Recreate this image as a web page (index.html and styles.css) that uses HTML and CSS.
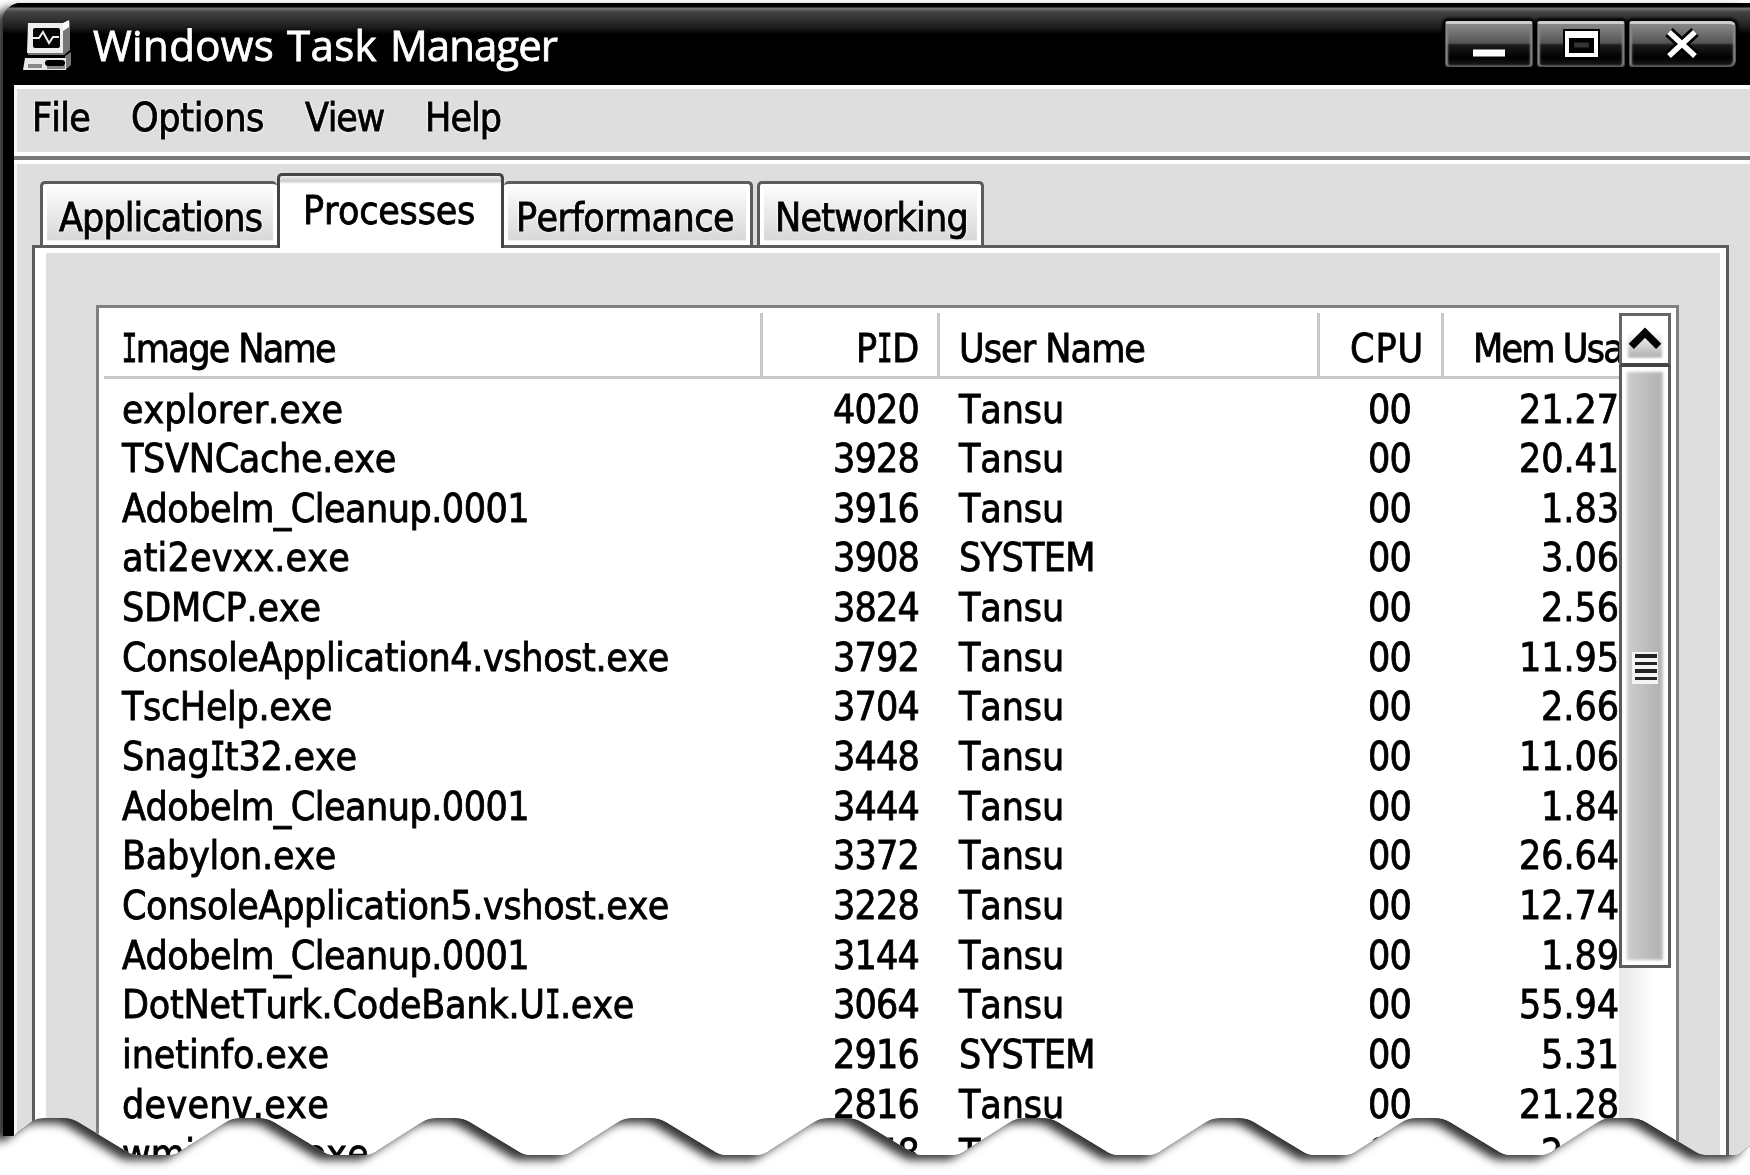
FILE: index.html
```html
<!DOCTYPE html>
<html lang="en">
<head>
<meta charset="utf-8">
<title>Windows Task Manager</title>
<link rel="stylesheet" href="styles.css">
</head>
<body>
<div class="shadow">
<div class="torn">
<div class="window">
  <header class="titlebar">
    <svg class="app-icon" width="52" height="52" viewBox="0 0 52 52">
      <path d="M7 4h35l5-3v29l-6 5H5V6z" fill="#777"/>
      <path d="M5 3h35v30H4z" fill="#eee"/>
      <path d="M40 3l6-3v7l-6 4z" fill="#fff"/>
      <rect x="10" y="8" width="27" height="20" rx="2" fill="#050505"/>
      <path d="M10 18h6l4-6 6 11 4-6h6" fill="none" stroke="#eee" stroke-width="2"/>
      <path d="M42 36l6-4v13l-6 5z" fill="#777"/>
      <path d="M2 38h41v12H0z" fill="#e8e8e8"/>
      <path d="M5 46h14M24 47h18" stroke="#888" stroke-width="4"/>
      <rect x="22" y="40" width="20" height="6" rx="3" fill="#000"/>
    </svg>
    <h1 class="title"><span data-w="181">Windows</span><span data-w="90">Task</span><span data-w="167">Manager</span></h1>
    <div class="controls">
      <span class="control"><svg width="88" height="46" viewBox="0 0 88 46"><path d="M28 32h32" stroke="#fff" stroke-width="7"/></svg></span>
      <span class="control"><svg width="88" height="46" viewBox="0 0 88 46"><path d="M26 8h37v31H26z" fill="#000"/><path fill="#fff" fill-rule="evenodd" d="M28 10h33v26H28zM32 17v15h25V17z"/><path d="M37 24h15" stroke="#333" stroke-width="5"/></svg></span>
      <span class="control close"><svg width="107" height="46" viewBox="0 0 107 46"><path d="M40 11l26 24M66 11L40 35" stroke="#000" stroke-width="11"/><path d="M40 11l26 24M66 11L40 35" stroke="#fff" stroke-width="5.500"/></svg></span>
    </div>
  </header>
  <div class="client">
    <nav class="menu">
      <span data-w="58">File</span><span data-w="133">Options</span><span data-w="79">View</span><span data-w="76">Help</span>
    </nav>
    <div class="rule"></div>
    <main class="pages">
      <div class="tabs">
        <div class="tab apps"><span data-w="203">Applications</span></div>
        <div class="tab active"><span data-w="172">Processes</span></div>
        <div class="tab perf"><span data-w="218">Performance</span></div>
        <div class="tab net"><span data-w="193">Networking</span></div>
      </div>
      <section class="panel">
        <div class="list">
          <div class="table">
            <div class="row head"><div><span data-w="213"><b class="cap-i">I</b>mage Name</span></div><div><span data-w="63">P<b class="cap-i">I</b>D</span></div><div><span data-w="186">User Name</span></div><div><span data-w="74">CPU</span></div><div><span data-w="190">Mem Usage</span></div></div>
            <div class="row"><div><span data-w="221">explorer.exe</span></div><div><span data-w="86">4020</span></div><div><span data-w="105">Tansu</span></div><div><span data-w="43">00</span></div><div><span data-w="100">21.27</span></div></div>
            <div class="row"><div><span data-w="274">TSVNCache.exe</span></div><div><span data-w="86">3928</span></div><div><span data-w="105">Tansu</span></div><div><span data-w="43">00</span></div><div><span data-w="100">20.41</span></div></div>
            <div class="row"><div><span data-w="407">Adobelm_Cleanup.0001</span></div><div><span data-w="86">3916</span></div><div><span data-w="105">Tansu</span></div><div><span data-w="43">00</span></div><div><span data-w="78">1.83</span></div></div>
            <div class="row"><div><span data-w="228">ati2evxx.exe</span></div><div><span data-w="86">3908</span></div><div><span data-w="136">SYSTEM</span></div><div><span data-w="43">00</span></div><div><span data-w="78">3.06</span></div></div>
            <div class="row"><div><span data-w="199">SDMCP.exe</span></div><div><span data-w="86">3824</span></div><div><span data-w="105">Tansu</span></div><div><span data-w="43">00</span></div><div><span data-w="78">2.56</span></div></div>
            <div class="row"><div><span data-w="547">ConsoleApplication4.vshost.exe</span></div><div><span data-w="86">3792</span></div><div><span data-w="105">Tansu</span></div><div><span data-w="43">00</span></div><div><span data-w="100">11.95</span></div></div>
            <div class="row"><div><span data-w="210">TscHelp.exe</span></div><div><span data-w="86">3704</span></div><div><span data-w="105">Tansu</span></div><div><span data-w="43">00</span></div><div><span data-w="78">2.66</span></div></div>
            <div class="row"><div><span data-w="235">Snag<b class="cap-i">I</b>t32.exe</span></div><div><span data-w="86">3448</span></div><div><span data-w="105">Tansu</span></div><div><span data-w="43">00</span></div><div><span data-w="100">11.06</span></div></div>
            <div class="row"><div><span data-w="407">Adobelm_Cleanup.0001</span></div><div><span data-w="86">3444</span></div><div><span data-w="105">Tansu</span></div><div><span data-w="43">00</span></div><div><span data-w="78">1.84</span></div></div>
            <div class="row"><div><span data-w="214">Babylon.exe</span></div><div><span data-w="86">3372</span></div><div><span data-w="105">Tansu</span></div><div><span data-w="43">00</span></div><div><span data-w="100">26.64</span></div></div>
            <div class="row"><div><span data-w="547">ConsoleApplication5.vshost.exe</span></div><div><span data-w="86">3228</span></div><div><span data-w="105">Tansu</span></div><div><span data-w="43">00</span></div><div><span data-w="100">12.74</span></div></div>
            <div class="row"><div><span data-w="407">Adobelm_Cleanup.0001</span></div><div><span data-w="86">3144</span></div><div><span data-w="105">Tansu</span></div><div><span data-w="43">00</span></div><div><span data-w="78">1.89</span></div></div>
            <div class="row"><div><span data-w="512">DotNetTurk.CodeBank.U<b class="cap-i">I</b>.exe</span></div><div><span data-w="86">3064</span></div><div><span data-w="105">Tansu</span></div><div><span data-w="43">00</span></div><div><span data-w="100">55.94</span></div></div>
            <div class="row"><div><span data-w="207">inetinfo.exe</span></div><div><span data-w="86">2916</span></div><div><span data-w="136">SYSTEM</span></div><div><span data-w="43">00</span></div><div><span data-w="78">5.31</span></div></div>
            <div class="row"><div><span data-w="207">devenv.exe</span></div><div><span data-w="86">2816</span></div><div><span data-w="105">Tansu</span></div><div><span data-w="43">00</span></div><div><span data-w="100">21.28</span></div></div>
            <div class="row"><div><span data-w="247">wmiprvse.exe</span></div><div><span data-w="86">2548</span></div><div><span data-w="105">Tansu</span></div><div><span data-w="43">00</span></div><div><span data-w="78">2.80</span></div></div>
          </div>
          <div class="scrollbar">
            <div class="arrow"><svg width="46" height="48" viewBox="0 0 46 48"><path d="M9 31L23 17l14 14" fill="none" stroke="#000" stroke-width="7.500"/></svg></div>
            <div class="thumb"><div class="grip"><i></i><i></i><i></i><i></i></div></div>
          </div>
        </div>
      </section>
    </main>
  </div>
</div>
</div>
</div>
<script src="fit.js"></script>
</body>
</html>
```
FILE: styles.css
```css
* { box-sizing: border-box; }
html, body { margin: 0; height: 1175px; overflow: hidden; background: #fff; }
body {
  font: 39px/50px "DejaVu Sans Condensed", "DejaVu Sans", sans-serif;
  font-stretch: condensed;
  font-kerning: none;
  font-variant-ligatures: none;
  color: #000;
}
[data-w] { white-space: pre; display: inline-block; -webkit-text-stroke: .8px currentColor; }

/* Capital I with serifs */
.cap-i {
  display: inline-block;
  margin: 0 -4px;
  font-family: "DejaVu Sans Mono", monospace;
  font-weight: 400;
  transform: scaleX(.68);
}

.shadow { filter: drop-shadow(-9px 5px 5px rgba(0, 0, 0, .8)); }
.torn {
  height: 1175px;
  padding: 3px 0 0 3px;
  clip-path: path("M0 0H1750V1146L1742 1152Q1740 1155 1736 1155 h-30q-6 0-12-4l-48-29q-7-4-14-4h-20q-8 0-14 4l-44 28q-6 5-14 5 h-30q-6 0-12-4l-48-29q-7-4-14-4h-20q-8 0-14 4l-44 28q-6 5-14 5 h-30q-6 0-12-4l-48-29q-7-4-14-4h-20q-8 0-14 4l-44 28q-6 5-14 5 h-30q-6 0-12-4l-48-29q-7-4-14-4h-20q-8 0-14 4l-44 28q-6 5-14 5 h-30q-6 0-12-4l-48-29q-7-4-14-4h-20q-8 0-14 4l-44 28q-6 5-14 5 h-30q-6 0-12-4l-48-29q-7-4-14-4h-20q-8 0-14 4l-44 28q-6 5-14 5 h-30q-6 0-12-4l-48-29q-7-4-14-4h-20q-8 0-14 4l-44 28q-6 5-14 5 h-30q-6 0-12-4l-48-29q-7-4-14-4h-20q-8 0-14 4l-44 28q-6 5-14 5 h-30q-6 0-12-4l-48-29q-7-4-14-4h-20q-6 0-10 2L13 1136H0Z");
}
.window {
  height: 1172px;
  width: 1760px;
  background: #000;
  border-radius: 18px 0 0 0;
  padding-left: 11px;
}

.titlebar {
  height: 82px;
  margin-left: -11px;
  padding-left: 20px;
  display: flex;
  align-items: flex-start;
  border-radius: 18px 0 0 0;
  background: linear-gradient(#000 0 4px, #777 5px, #444 9px, #303030 17px, #1a1a1a 25px, #000 31px);
}
.app-icon { margin-top: 17px; }
.title {
  margin: 12px 0 0 18px;
  display: flex;
  gap: 13px;
  font: 500 42px/60px "Open Sans", sans-serif;
  color: #fff;
}
.controls { margin: 18px 27px 0 auto; display: flex; gap: 4px; }
.control {
  width: 88px;
  height: 46px;
  border: 1px solid #555;
  border-top: 3px solid #ccc;
  border-radius: 3px;
  background: linear-gradient(#888, #555 45%, #1c1c1c 50%, #000 80%, #1c1c1c);
  box-shadow: 0 0 3px 3px #000, inset 2px 0 2px #888, inset -2px 0 2px #888;
}
.control svg { display: block; margin: -3px 0 0 -1px; }
.control.close { width: 107px; border-radius: 3px 6px 6px 3px; }

.client {
  height: 1090px;
  background: #dedede;
  border-top: 4px solid #fff;
  border-left: 3px solid #f6f6f6;
}
.menu {
  height: 63px;
  padding: 4px 0 0 15px;
  display: flex;
  gap: 41px;
  text-shadow: 0 0 3px #fff, 0 0 3px #fff;
}
.rule { height: 12px; margin-left: -3px; background: linear-gradient(#fff 0 4px, #777 4px 8px, #fff 8px); }

.pages { padding: 10px 34px 0 15px; }
.tabs {
  height: 71px;
  padding-left: 8px;
  display: flex;
  align-items: flex-end;
  text-shadow: 0 0 3px #fff, 0 0 3px #fff;
}
.tab {
  height: 64px;
  border: 3px solid #5c5c5c;
  border-bottom: 0;
  border-radius: 5px 5px 0 0;
  background: linear-gradient(#fff, #f3f3f3 25%, #d8d8d8 92%, #fff 93%);
  box-shadow: inset 4px 0 1px #fff, inset -4px 0 1px #fff;
  line-height: 50px;
  padding-top: 9px;
}
.apps { width: 237px; padding-left: 16px; border-right: 0; }
.active {
  width: 227px;
  height: 75px;
  margin-bottom: -3px;
  padding: 10px 0 0 23px;
  border-color: #444;
  background: linear-gradient(#eee, #ccc 5px, #fff 8px);
  box-shadow: none;
  position: relative;
}
.perf { width: 249px; padding-left: 12px; border-left: 0; }
.net { width: 227px; padding-left: 15px; margin-left: 4px; }

.panel {
  height: 920px;
  border: 3px solid #5c5c5c;
  box-shadow: inset 11px 0 1px #fff, inset -6px 0 1px #fff, inset 0 5px 1px #fff;
  padding: 57px 0 0 61px;
}
.list {
  width: 1583px;
  height: 860px;
  border: 3px solid #808080;
  background: #fff;
  padding: 5px 5px 0 5px;
  display: flex;
}
.table { width: 1516px; overflow: hidden; }
.row {
  display: grid;
  grid-template-columns: 659px 177px 380px 124px 176px;
  height: 49.67px;
}
.row > div { display: flex; overflow: hidden; white-space: nowrap; padding-left: 18px; }
.row > div:nth-child(2) { justify-content: flex-end; padding-right: 21px; }
.row > div:nth-child(3) { padding-left: 19px; }
.row > div:nth-child(4) { justify-content: flex-end; padding-right: 33px; }
.row > div:nth-child(5) { justify-content: flex-end; padding: 0 1px 0 0; }
.row.head { height: 66px; margin-bottom: 5.500px; border-bottom: 3px solid #c8c8c8; }
.head > div { border-right: 3px solid #c8c8c8; padding-top: 11px; }
.row.head > div:nth-child(2) { padding-right: 18px; }
.row.head > div:nth-child(4) { padding-right: 17px; }
.row.head > div:nth-child(5) { justify-content: flex-start; padding: 11px 0 0 29px; border: 0; }

.scrollbar { width: 52px; background: linear-gradient(90deg, #e8e8e8, #fff 70%); }
.arrow {
  height: 54px;
  border: 3px solid #666;
  border-bottom: 4px solid #444;
  background: #fff;
}
.arrow svg { display: block; height: 47px; background: linear-gradient(90deg, #fff 4px, transparent 8px 38px, #fff 42px), linear-gradient(#fff 35%, #bbb 80%, #bbb 86%, #fff 92%); }
.thumb {
  height: 601px;
  border: 3px solid #5c5c5c;
  border-top: 0;
  background: linear-gradient(90deg, #d0d0d0, #b4b4b4 80%, #c4c4c4);
  box-shadow: inset 0 0 3px 5px #fff;
  display: flex;
  justify-content: center;
  padding-top: 285px;
}
.grip {
  width: 26px;
  height: 32px;
  padding: 2px 1px 0 3px;
  background: #f4f4f4;
  display: flex;
  flex-direction: column;
  gap: 4px;
}
.grip i { height: 3.500px; background: #222; }
```
FILE: fit.js
```js
document.querySelectorAll('[data-w]').forEach(function (el) {
  var natural = el.getBoundingClientRect().width;
  var spacing = (Number(el.dataset.w) - natural) / el.textContent.length;
  el.style.letterSpacing = spacing.toFixed(3) + 'px';
});
```
